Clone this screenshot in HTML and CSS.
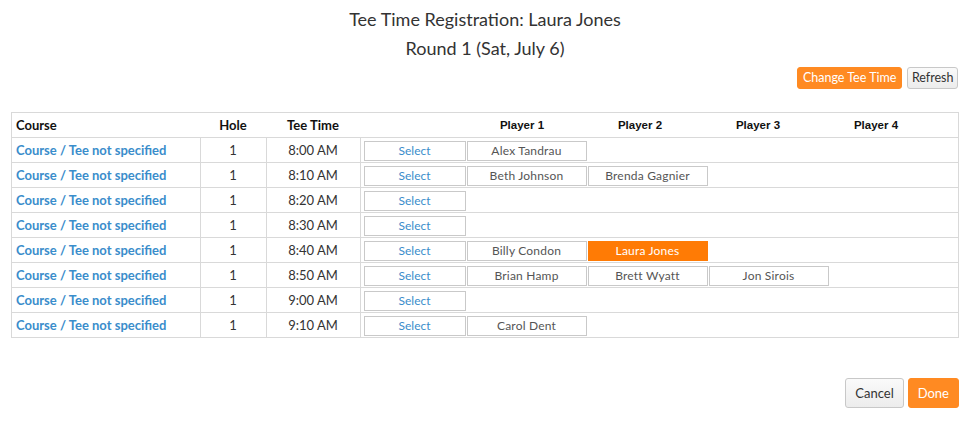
FILE: index.html
```html
<!DOCTYPE html>
<html>
<head>
<meta charset="utf-8">
<link rel="stylesheet" href="styles.css">
</head>
<body>
<div class="page">
  <h1 class="title">Tee Time Registration: Laura Jones</h1>
  <h2 class="subtitle">Round 1 (Sat, July 6)</h2>
  <div class="toolbar">
    <button class="btn btn-orange">Change Tee Time</button>
    <button class="btn btn-light btn-refresh">Refresh</button>
  </div>
  <table class="grid">
    <thead>
      <tr>
        <th class="c-course">Course</th>
        <th class="c-hole">Hole</th>
        <th class="c-time">Tee Time</th>
        <th class="c-players">
          <div class="phead"><span></span><span>Player 1</span><span>Player 2</span><span>Player 3</span><span>Player 4</span></div>
        </th>
      </tr>
    </thead>
    <tbody>
      <tr><td class="c-course"><a>Course / Tee not specified</a></td><td class="c-hole">1</td><td class="c-time">8:00 AM</td>
        <td class="c-players"><div class="slots"><span class="slot select">Select</span><span class="slot">Alex Tandrau</span></div></td></tr>
      <tr><td class="c-course"><a>Course / Tee not specified</a></td><td class="c-hole">1</td><td class="c-time">8:10 AM</td>
        <td class="c-players"><div class="slots"><span class="slot select">Select</span><span class="slot">Beth Johnson</span><span class="slot">Brenda Gagnier</span></div></td></tr>
      <tr><td class="c-course"><a>Course / Tee not specified</a></td><td class="c-hole">1</td><td class="c-time">8:20 AM</td>
        <td class="c-players"><div class="slots"><span class="slot select">Select</span></div></td></tr>
      <tr><td class="c-course"><a>Course / Tee not specified</a></td><td class="c-hole">1</td><td class="c-time">8:30 AM</td>
        <td class="c-players"><div class="slots"><span class="slot select">Select</span></div></td></tr>
      <tr><td class="c-course"><a>Course / Tee not specified</a></td><td class="c-hole">1</td><td class="c-time">8:40 AM</td>
        <td class="c-players"><div class="slots"><span class="slot select">Select</span><span class="slot">Billy Condon</span><span class="slot me">Laura Jones</span></div></td></tr>
      <tr><td class="c-course"><a>Course / Tee not specified</a></td><td class="c-hole">1</td><td class="c-time">8:50 AM</td>
        <td class="c-players"><div class="slots"><span class="slot select">Select</span><span class="slot">Brian Hamp</span><span class="slot">Brett Wyatt</span><span class="slot">Jon Sirois</span></div></td></tr>
      <tr><td class="c-course"><a>Course / Tee not specified</a></td><td class="c-hole">1</td><td class="c-time">9:00 AM</td>
        <td class="c-players"><div class="slots"><span class="slot select">Select</span></div></td></tr>
      <tr><td class="c-course"><a>Course / Tee not specified</a></td><td class="c-hole">1</td><td class="c-time">9:10 AM</td>
        <td class="c-players"><div class="slots"><span class="slot select">Select</span><span class="slot">Carol Dent</span></div></td></tr>
    </tbody>
  </table>
  <div class="footer">
    <button class="btn btn-light btn-lg">Cancel</button>
    <button class="btn btn-orange btn-lg">Done</button>
  </div>
</div>
</body>
</html>
```
FILE: styles.css
```css
html, body { margin: 0; padding: 0; background: #fff; }
body { font-family: Lato, "Liberation Sans", sans-serif; color: #333; }
.page { padding: 0 14px 0 11px; }
.title { margin: 0; padding-top: 8px; height: 22px; font-size: 18px; font-weight: 400; text-align: center; line-height: 22px; color: #333; }
.subtitle { margin: 0; padding-top: 7px; height: 22px; font-size: 18px; font-weight: 400; text-align: center; line-height: 22px; color: #333; }
.toolbar { display: flex; justify-content: flex-end; gap: 5px; margin-top: 8px; padding-right: 1px; }
.btn { font-family: Lato, "Liberation Sans", sans-serif; font-size: 12.5px; border-radius: 3px; cursor: pointer; padding: 0 5px; height: 22px; line-height: 20px; }
.btn-refresh { padding: 0 3.5px; }
.btn-orange { background: #ff8a22; border: 1px solid #ff8a22; color: #fff; }
.btn-light { background: linear-gradient(#fafafa, #ececec); border: 1px solid #c8c8c8; color: #333; }
.btn-lg { height: 30px; line-height: 28px; font-size: 13px; padding: 0 9px; }
.grid { margin-top: 23px; width: 948px; border-collapse: collapse; table-layout: fixed; font-size: 13px; }
.grid th, .grid td { border: 1px solid #d9d9d9; height: 24px; padding: 0; }
.grid thead th { border-left: none; border-right: none; font-weight: 700; color: #111; }
.grid thead th:first-child { border-left: 1px solid #d9d9d9; }
.grid thead th:last-child { border-right: 1px solid #d9d9d9; }
.c-course { width: 184px; text-align: left; padding-left: 4px !important; }
.c-hole { width: 66px; text-align: center; }
.c-time { width: 94px; text-align: center; }
.grid td.c-time, .grid td.c-hole { color: #333; }
.c-players { text-align: left; }
.phead { display: grid; grid-template-columns: 103px repeat(4, 118px) 1fr; font-family: "Liberation Sans", Arial, sans-serif; font-size: 11.5px; font-weight: 700; }
.phead span { text-align: center; }
.grid td a { color: #3a8dcb; font-weight: 700; }
.slots { display: flex; gap: 1px; padding: 2px 3px 1px; }
.slot { box-sizing: border-box; width: 120px; height: 20px; line-height: 18px; border: 1px solid #c9c9c9; text-align: center; font-size: 12px; color: #555; letter-spacing: 0.2px; }
.slot.select { width: 102px; color: #3a8dcb; letter-spacing: 0; }
.slot.me { background: #ff7b05; border-color: #ff7b05; color: #fff; }
.footer { display: flex; justify-content: flex-end; gap: 4px; margin-top: 40px; }
```
